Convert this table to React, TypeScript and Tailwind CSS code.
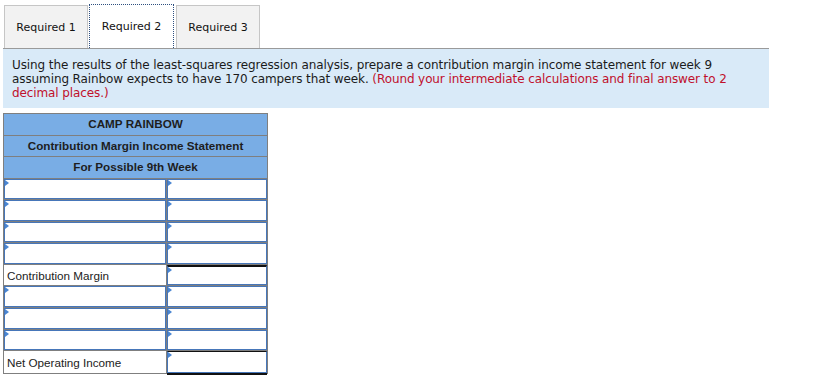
import React from 'react';

type Row = { label?: string; top?: 'thick' | 'thin'; under?: boolean };

const rows: Row[] = [
  {},
  {},
  {},
  {},
  { label: 'Contribution Margin', top: 'thick' },
  {},
  {},
  {},
  { label: 'Net Operating Income', top: 'thin', under: true },
];

const InputBox = ({ className = '' }: { className?: string }) => (
  <div className={`relative h-full w-full bg-white border border-[#4676b9] ${className}`}>
    {/* little blue marker in the corner */}
    <span className="absolute left-0 top-0 h-0 w-0 border-y-[3px] border-l-[4px] border-y-transparent border-l-[#4a86d2]" />
  </div>
);

const tabs = ['Required 1', 'Required 2', 'Required 3'];

export default function App() {
  return (
    <div className="w-[826px] h-[378px] overflow-hidden bg-white">
      {/* Tabs */}
      <div className="flex items-end pt-[4px] pl-[4px]">
        {tabs.map((t, i) =>
          i === 1 ? (
            <div
              key={t}
              className="ml-[1px] flex h-[44px] w-[85px] items-center justify-center border border-b-0 border-dotted border-[#2d4f7f] bg-white pt-[2px] text-[11px] text-[#111] font-['DejaVu_Sans',sans-serif]"
            >
              {t}
            </div>
          ) : (
            <div
              key={t}
              className={`${i === 2 ? 'ml-[2px]' : ''} flex h-[43px] w-[84px] items-center justify-center border border-[#c6c6c6] border-b-0 bg-[#f2f2f2] pt-[2px] text-[11px] text-[#111] font-['DejaVu_Sans',sans-serif]`}
            >
              {t}
            </div>
          )
        )}
      </div>

      {/* Instructions */}
      <div className="ml-[3px] w-[766px] border-t border-[#9a9a9a] bg-[#d9eaf8] pl-[9px] pt-[9px] pb-[8px] text-[12px] leading-[14px] tracking-[-0.1px] text-[#1b1b1b] font-['DejaVu_Sans',sans-serif]">
        Using the results of the least-squares regression analysis, prepare a contribution margin income statement for week 9
        assuming Rainbow expects to have 170 campers that week.{' '}
        <span className="text-[#c0102c]">
          (Round your intermediate calculations and final answer to 2 decimal places.)
        </span>
      </div>

      {/* Statement */}
      <div className="ml-[3px] mt-[5px] w-[265px] border border-[#7f7f7f] font-['Liberation_Sans',Arial,sans-serif] text-[11.7px]">
        {['CAMP RAINBOW', 'Contribution Margin Income Statement', 'For Possible 9th Week'].map((h) => (
          <div
            key={h}
            className="flex h-[21.5px] items-center justify-center border-b border-[#7f7f7f] bg-[#79ade5] font-bold text-[#1e1e1e]"
          >
            {h}
          </div>
        ))}
        {rows.map((r, i) => (
          <div
            key={i}
            className={`flex h-[21.6px] ${i < rows.length - 1 ? 'border-b border-[#7f7f7f]' : ''}`}
          >
            <div className="w-[163px] border-r border-[#7f7f7f]">
              {r.label ? (
                <div className="flex h-full items-center pl-[3px] pt-[1px] text-[#222]">{r.label}</div>
              ) : (
                <InputBox />
              )}
            </div>
            <div className="relative flex-1">
              <InputBox
                className={
                  r.top === 'thick'
                    ? 'border-t-2 border-t-[#111]'
                    : r.top === 'thin'
                    ? 'border-t-[#111]'
                    : ''
                }
              />
              {r.under && (
                <div className="absolute left-0 right-0 -bottom-[2px] h-[2px] bg-[#111]" />
              )}
            </div>
          </div>
        ))}
      </div>
    </div>
  );
}
